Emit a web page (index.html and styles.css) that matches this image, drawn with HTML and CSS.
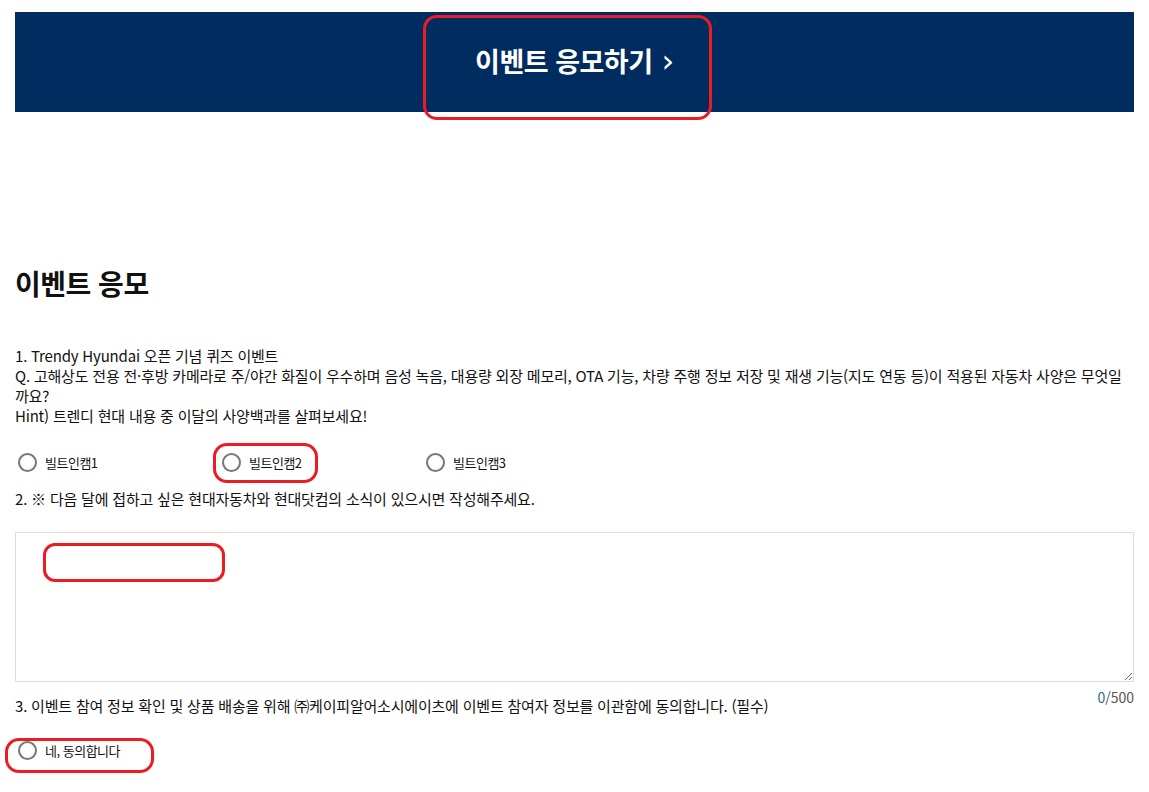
FILE: index.html
```html
<!DOCTYPE html>
<html lang="ko">
<head>
  <meta charset="UTF-8">
  <meta name="viewport" content="width=device-width, initial-scale=1.0">
  <title>이벤트 응모</title>
  <link rel="stylesheet" href="styles.css">
</head>
<body>

  <div class="page">
    <div class="banner">
      <a class="banner-link" href="#apply">이벤트 응모하기 <span class="arrow">&#x203A;</span></a>
      <span class="mark mark-banner"></span>
    </div>

    <h2 class="section-title" id="apply">이벤트 응모</h2>

    <div class="question question-quiz">
      <p class="question-text">1. Trendy Hyundai 오픈 기념 퀴즈 이벤트<br>
        Q. 고해상도 전용 전·후방 카메라로 주/야간 화질이 우수하며 음성 녹음, 대용량 외장 메모리, OTA 기능, 차량 주행 정보 저장 및 재생 기능(지도 연동 등)이 적용된 자동차 사양은 무엇일까요?<br>
        Hint) 트렌디 현대 내용 중 이달의 사양백과를 살펴보세요!</p>

      <div class="options">
        <label class="option"><input type="radio" name="quiz"><span>빌트인캠1</span></label>
        <label class="option"><input type="radio" name="quiz"><span>빌트인캠2</span><span class="mark mark-option"></span></label>
        <label class="option"><input type="radio" name="quiz"><span>빌트인캠3</span></label>
      </div>
    </div>

    <div class="question question-opinion">
      <p class="question-text">2. ※ 다음 달에 접하고 싶은 현대자동차와 현대닷컴의 소식이 있으시면 작성해주세요.</p>
      <div class="textarea-wrap">
        <textarea class="opinion" maxlength="500"></textarea>
        <span class="mark mark-textarea"></span>
      </div>
      <div class="counter"><span class="count">0</span>/500</div>
    </div>

    <div class="question question-agree">
      <p class="question-text">3. 이벤트 참여 정보 확인 및 상품 배송을 위해 ㈜케이피알어소시에이츠에 이벤트 참여자 정보를 이관함에 동의합니다. (필수)</p>
      <div class="options">
        <label class="option"><input type="radio" name="agree"><span>네, 동의합니다</span><span class="mark mark-agree"></span></label>
      </div>
    </div>
  </div>

</body>
</html>
```

FILE: styles.css
```css
body {
  margin: 0;
  padding: 0;
  font-family: "Noto Sans CJK KR", "Noto Sans", sans-serif;
  color: #111;
  background-color: #fff;
}

.page {
  padding: 12px 15px 0;
}

.banner {
  position: relative;
  height: 100px;
  background-color: #002c5f;
  display: flex;
  justify-content: center;
  align-items: center;
  padding-bottom: 4px;
  box-sizing: border-box;
}

.banner-link {
  color: #fff;
  font-size: 27px;
  font-weight: bold;
  text-decoration: none;
  letter-spacing: -0.5px;
}

.banner-link .arrow {
  font-weight: normal;
  font-size: 32px;
  font-family: "DejaVu Sans", sans-serif;
  margin-left: 2px;
}

.section-title {
  margin: 151px 0 0;
  font-size: 28px;
  font-weight: bold;
  line-height: 40px;
  letter-spacing: -0.5px;
}

.question-text {
  margin: 0;
  font-size: 15px;
  line-height: 20px;
  letter-spacing: -0.2px;
}

.question-quiz {
  margin-top: 43px;
}

.options {
  display: flex;
  margin-top: 14px;
  margin-bottom: 5px;
  height: 44px;
  align-items: center;
}

.option {
  position: relative;
  display: flex;
  align-items: center;
  width: 204px;
  font-size: 13px;
  letter-spacing: -0.5px;
  cursor: pointer;
}

.option input {
  appearance: none;
  width: 19px;
  height: 19px;
  margin: 0 8px 0 3px;
  border: 2px solid #777;
  border-radius: 50%;
  box-sizing: border-box;
}

.textarea-wrap {
  position: relative;
  margin-top: 23px;
}

.opinion {
  display: block;
  width: 100%;
  height: 150px;
  box-sizing: border-box;
  border: 1px solid #e2dcd2;
  resize: vertical;
  padding: 10px;
  font-family: inherit;
}

.counter {
  text-align: right;
  font-size: 14px;
  color: #555;
  line-height: 16px;
  margin-top: 7px;
}

.counter .count {
  color: #1a6e96;
}

.question-agree .question-text {
  margin-top: -9px;
}

.question-agree .options {
  margin-top: 12px;
}

/* red annotation boxes */
.mark {
  position: absolute;
  border: 3px solid #ec1c24;
  border-radius: 14px;
  pointer-events: none;
}

.mark-banner {
  left: 408px;
  top: 3px;
  width: 283px;
  height: 99px;
}

.mark-option {
  left: -6px;
  top: -10px;
  width: 99px;
  height: 34px;
}

.mark-textarea {
  left: 28px;
  top: 11px;
  width: 176px;
  height: 33px;
  border-radius: 12px;
}

.mark-agree {
  left: -10px;
  top: -3px;
  width: 143px;
  height: 29px;
}
```
